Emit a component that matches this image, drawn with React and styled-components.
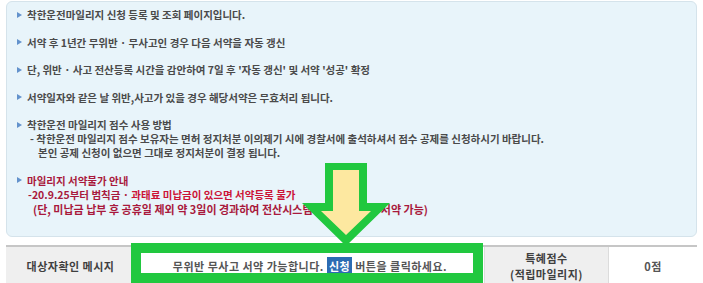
import React from "react";
import styled, {createGlobalStyle} from "styled-components";

const GlobalStyle = createGlobalStyle`
  body {
    margin: 0;
    background: #ffffff;
    font-family: "Noto Sans CJK KR", "Noto Sans", sans-serif;
  }
`;

const Page = styled.div`
  position: relative;
  width: 703px;
  height: 283px;
  box-sizing: border-box;
  padding: 1px 6px 0 6px;
  overflow: hidden;
`;

const InfoBox = styled.div`
  height: 236px;
  box-sizing: border-box;
  border: 1px solid #d5e3eb;
  border-radius: 6px;
  background: #e8f4fa;
  padding-top: 6px;
  display: flex;
  flex-direction: column;
  gap: 13.5px;
`;

const Item = styled.div`
  display: flex;
  align-items: flex-start;
  padding-left: 10px;
  font-size: 10.5px;
  line-height: 14px;
  font-weight: 700;
  color: ${p => (p.$alert ? "#a8193c" : "#4a4a4a")};
`;

const Bullet = styled.span`
  flex: none;
  width: 0;
  height: 0;
  margin: 3.5px 5px 0 0;
  border-top: 3.5px solid transparent;
  border-bottom: 3.5px solid transparent;
  border-left: 5px solid #6392cc;
`;

const ItemBody = styled.div`
  display: flex;
  flex-direction: column;
`;

const Line = styled.div`
  margin-left: ${p => p.$indent || 0}px;
  font-size: ${p => p.$size || "inherit"};
  white-space: nowrap;
`;

const Hot = styled.span`
  color: #cc1236;
`;

const TableWrap = styled.div`
  position: relative;
  margin-top: 8px;
`;

const Table = styled.div`
  display: grid;
  grid-template-columns: 129px 349px 124px 1fr;
  height: 37px;
  border-top: 2px solid #c6c6c6;
  border-bottom: 1px solid #d2d2d2;
`;

const Cell = styled.div`
  display: flex;
  flex-direction: column;
  align-items: center;
  justify-content: center;
  background: ${p => (p.$head ? "#efefef" : "#ffffff")};
  border-left: ${p => (p.$first ? "none" : "1px solid #dcdcdc")};
  font-size: 11px;
  line-height: 16px;
  letter-spacing: 0.5px;
  color: ${p => (p.$head ? "#3f3f3f" : "#555555")};
  font-weight: 700;
  white-space: nowrap;
`;

const ApplyTag = styled.span`
  display: inline-block;
  background: #2c6cb3;
  color: #ffffff;
  padding: 1px 2px;
  margin: 0 3px;
  line-height: 16px;
`;

const Highlight = styled.div`
  position: absolute;
  left: 125px;
  top: -2px;
  width: 352px;
  height: 40px;
  box-sizing: border-box;
  border: 10px solid #21c83f;
  pointer-events: none;
`;

const ArrowLayer = styled.svg`
  position: absolute;
  left: 0;
  top: 0;
  pointer-events: none;
`;

const Arrow = () => (
    <ArrowLayer width="703" height="283" viewBox="0 0 703 283">
        <polygon points="325,163 367,163 367,203 390,203 346,246 302,203 325,203" fill="#21c83f"/>
        <polygon points="333,170 359,170 359,211 371,211 346,235 321,211 333,211" fill="#fde8a0"/>
    </ArrowLayer>
);

const App = () => {
    return (
        <>
            <GlobalStyle/>
            <Page>
                <InfoBox>
                    <Item>
                        <Bullet/>
                        <ItemBody><Line>착한운전마일리지 신청 등록 및 조회 페이지입니다.</Line></ItemBody>
                    </Item>
                    <Item>
                        <Bullet/>
                        <ItemBody><Line>서약 후 1년간 무위반 · 무사고인 경우 다음 서약을 자동 갱신</Line></ItemBody>
                    </Item>
                    <Item>
                        <Bullet/>
                        <ItemBody><Line>단, 위반 · 사고 전산등록 시간을 감안하여 7일 후 '자동 갱신' 및 서약 '성공' 확정</Line></ItemBody>
                    </Item>
                    <Item>
                        <Bullet/>
                        <ItemBody><Line>서약일자와 같은 날 위반,사고가 있을 경우 해당서약은 무효처리 됩니다.</Line></ItemBody>
                    </Item>
                    <Item>
                        <Bullet/>
                        <ItemBody>
                            <Line>착한운전 마일리지 점수 사용 방법</Line>
                            <Line $indent={3}>- 착한운전 마일리지 점수 보유자는 면허 정지처분 이의제기 시에 경찰서에 출석하셔서 점수 공제를 신청하시기 바랍니다.</Line>
                            <Line $indent={11}>본인 공제 신청이 없으면 그대로 정지처분이 결정 됩니다.</Line>
                        </ItemBody>
                    </Item>
                    <Item $alert>
                        <Bullet/>
                        <ItemBody>
                            <Line>마일리지 서약불가 안내</Line>
                            <Line $indent={1}>-20.9.25부터 범칙금 · <Hot>과태료 미납금이 있으면 서약등록 불가</Hot></Line>
                            <Line $indent={6} $size="11px">(단, 미납금 납부 후 공휴일 제외 약 3일이 경과하여 전산시스템에 반영된 이후 서약 가능)</Line>
                        </ItemBody>
                    </Item>
                </InfoBox>
                <TableWrap>
                    <Table>
                        <Cell $head $first>대상자확인 메시지</Cell>
                        <Cell>
                            <div>무위반 무사고 서약 가능합니다.<ApplyTag>신청</ApplyTag>버튼을 클릭하세요.</div>
                        </Cell>
                        <Cell $head>
                            <div>특혜점수</div>
                            <div>(적립마일리지)</div>
                        </Cell>
                        <Cell>0점</Cell>
                    </Table>
                    <Highlight/>
                </TableWrap>
                <Arrow/>
            </Page>
        </>
    );
};

export default App;
